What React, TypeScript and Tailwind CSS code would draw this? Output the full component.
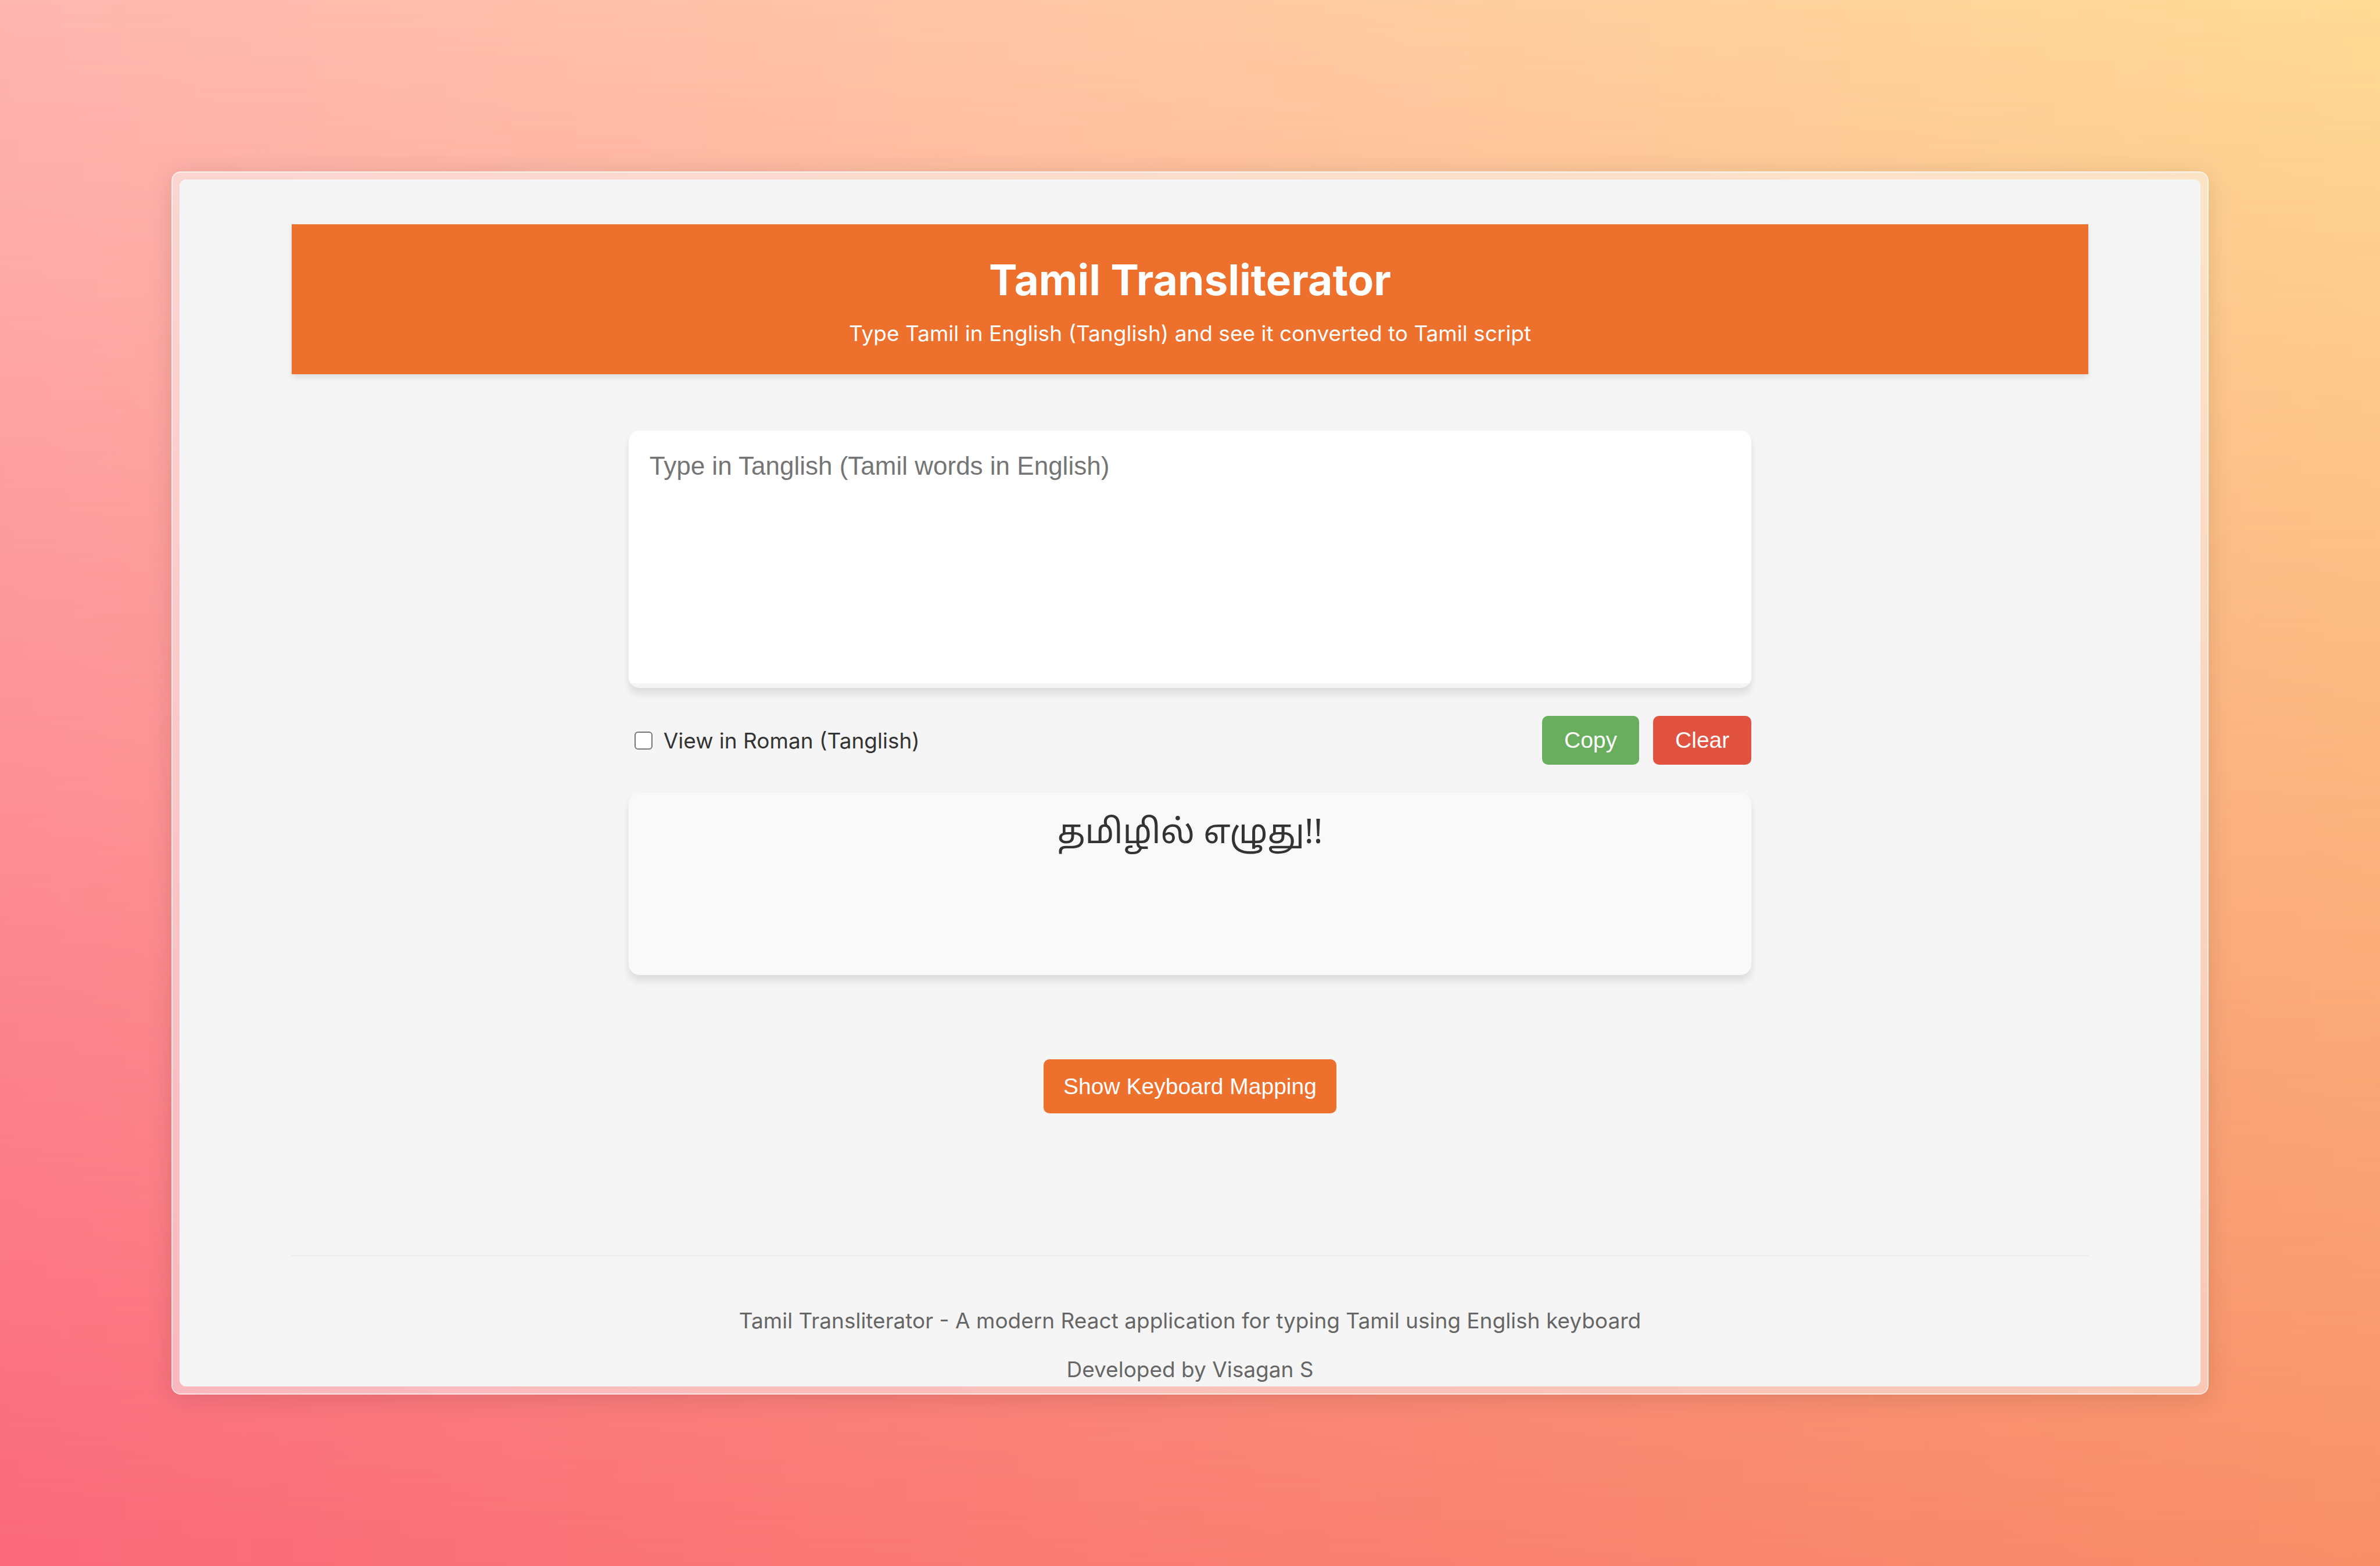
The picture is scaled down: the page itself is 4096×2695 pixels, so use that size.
import { useState } from "react";

function Header() {
  return (
    <header className="flex flex-col items-center gap-[16px] bg-[#ed702d] pt-[50px] pb-[41px] text-white shadow-[0_5px_10px_rgba(0,0,0,0.1)]">
      <h1 className="text-[73px] leading-[92px] font-bold">Tamil Transliterator</h1>
      <p className="text-[37px] leading-[59px]">
        Type Tamil in English (Tanglish) and see it converted to Tamil script
      </p>
    </header>
  );
}

function Footer() {
  return (
    <footer className="mt-[244px] flex flex-col items-center gap-[25px] border-t-2 border-[#ebebeb] pt-[81px] text-[37px] leading-[59px] text-[#666]">
      <p>Tamil Transliterator - A modern React application for typing Tamil using English keyboard</p>
      <p>Developed by Visagan S</p>
    </footer>
  );
}

export default function App() {
  const [text, setText] = useState("");
  const [roman, setRoman] = useState(false);

  return (
    <div className="relative isolate flex min-h-screen flex-col bg-linear-to-r from-[#ffb7b0] to-[#ffdb95] p-[295px] font-['Inter','Noto_Sans',sans-serif]">
      <div className="absolute inset-0 -z-10 bg-linear-to-r from-[#fb687a] to-[#f88f67] mask-linear-[to_bottom,transparent,black]" />
      <div className="flex grow flex-col rounded-[16px] border-2 border-white/80 bg-[#f7f7f7]/52 bg-clip-padding p-[12px] shadow-[0_6px_44px_rgba(0,0,0,0.12)]">
        <div className="grow rounded-[11px] bg-[#f5f5f5] px-[193px] pt-[77px]">
          <Header />
          <main className="mx-auto mt-[97px] flex w-5/8 flex-col">
            <div className="overflow-hidden rounded-[19px] pb-[8px] shadow-[0_10px_14px_rgba(0,0,0,0.1)]">
              <textarea
                aria-label="Tanglish text"
                className="block h-[435px] w-full resize-none bg-white p-[36px] font-['Liberation_Sans',sans-serif] text-[44px] leading-[50px] text-[#333] outline-none placeholder:text-[#757575]"
                placeholder="Type in Tanglish (Tamil words in English)"
                value={text}
                onChange={(e) => setText(e.target.value)}
              />
            </div>
            <div className="mt-[48px] flex items-center justify-between">
              <label className="flex items-center gap-[19px] pl-[10px] text-[37px] leading-[59px] text-[#333]">
                <input
                  type="checkbox"
                  className="size-[31px] appearance-none rounded-[6px] border-2 border-[#767676] bg-white checked:bg-[#767676]"
                  checked={roman}
                  onChange={(e) => setRoman(e.target.checked)}
                />
                View in Roman (Tanglish)
              </label>
              <div className="flex gap-[24px] font-['Liberation_Sans',sans-serif] text-[39px] leading-[44px] text-white">
                <button className="rounded-[10px] bg-[#69ae5e] px-[38px] py-[20px]">Copy</button>
                <button
                  className="rounded-[10px] bg-[#e15241] px-[38px] py-[20px]"
                  onClick={() => setText("")}
                >
                  Clear
                </button>
              </div>
            </div>
            <div className="mt-[48px] min-h-[314px] rounded-[19px] bg-[#f9f9f9] p-[36px] text-center font-['Noto_Sans_Tamil','Noto_Sans',sans-serif] text-[58px] leading-[74px] text-[#333] shadow-[0_10px_14px_rgba(0,0,0,0.1)]">
              {text || "தமிழில் எழுது!!"}
            </div>
            <button className="mt-[145px] self-center rounded-[10px] bg-[#ed702d] px-[34px] py-[24px] font-['Liberation_Sans',sans-serif] text-[39px] leading-[45px] text-white">
              Show Keyboard Mapping
            </button>
          </main>
          <Footer />
        </div>
      </div>
    </div>
  );
}
